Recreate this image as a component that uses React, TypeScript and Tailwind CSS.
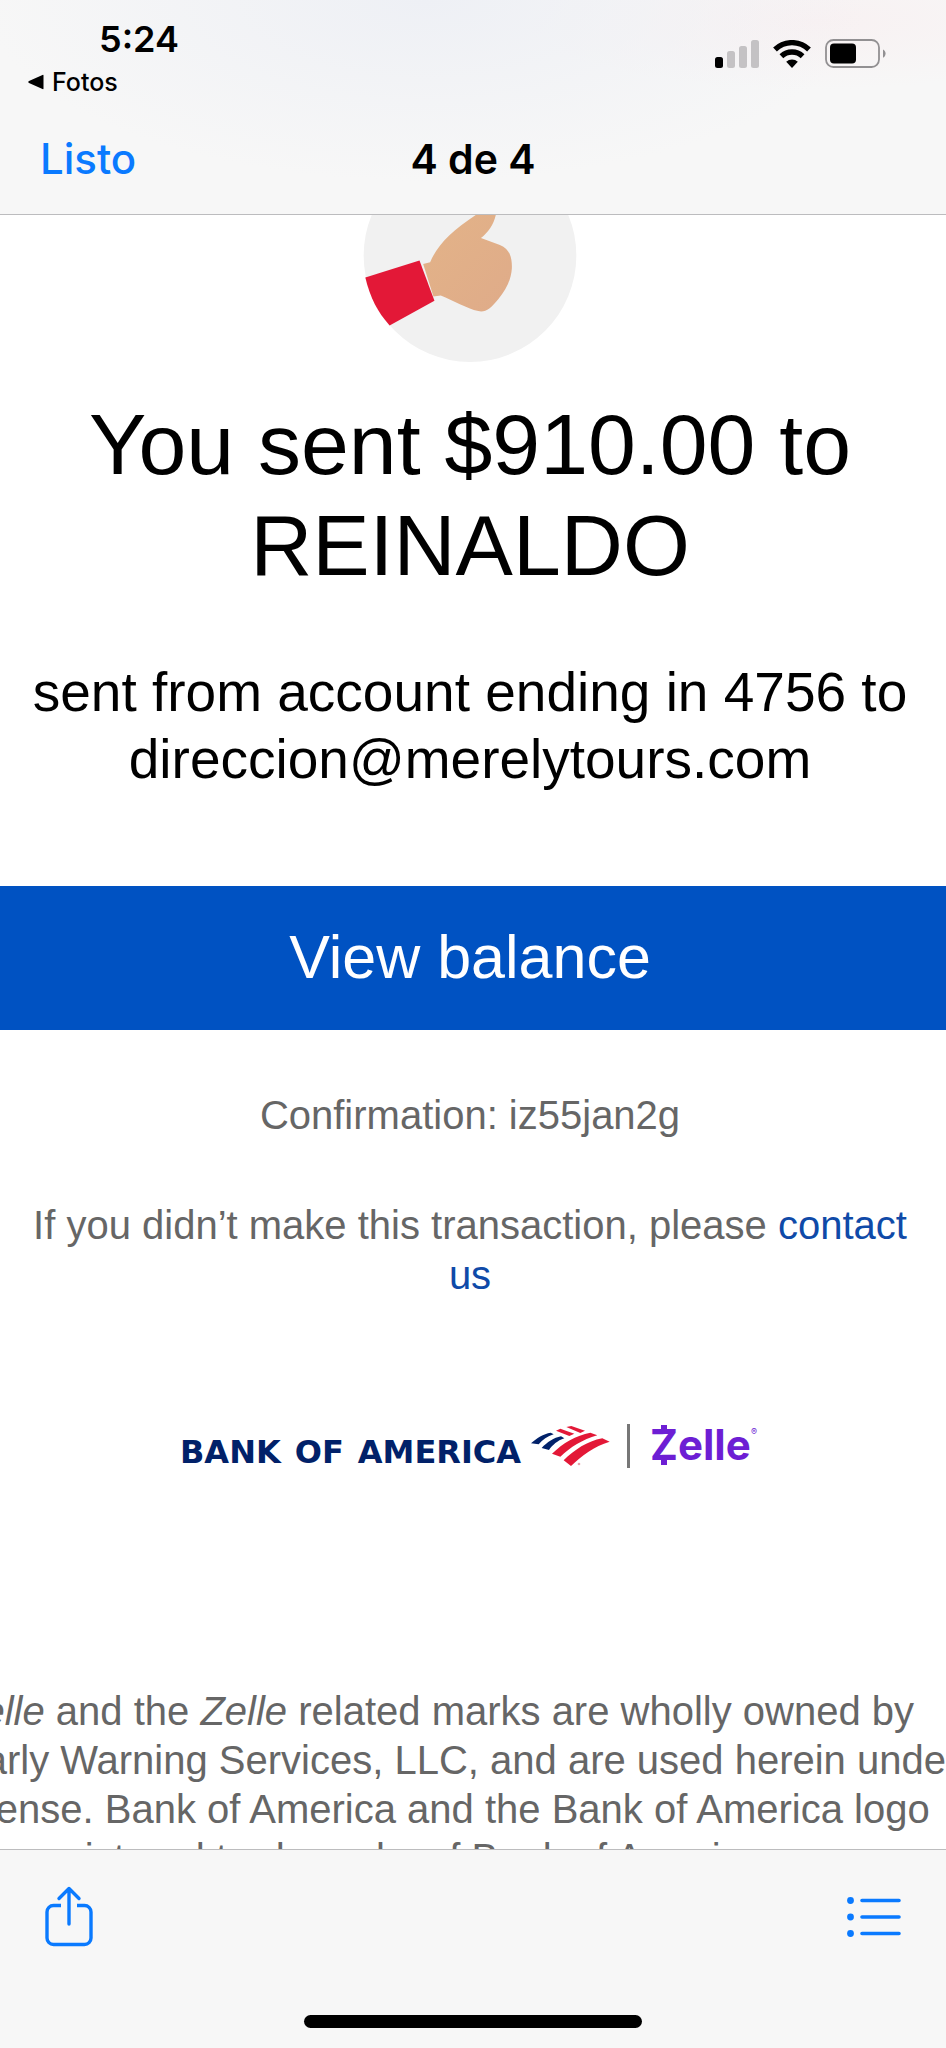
function SignalIcon() {
  return (
    <svg className="h-7 w-11" viewBox="0 0 44 28" aria-hidden="true">
      <rect x="0" y="17" width="8" height="11" rx="2.5" fill="#000" />
      <rect x="12" y="11" width="8" height="17" rx="2.5" fill="#c4c2c4" />
      <rect x="24" y="6" width="8" height="22" rx="2.5" fill="#c4c2c4" />
      <rect x="36" y="0" width="8" height="28" rx="2.5" fill="#c4c2c4" />
    </svg>
  );
}

function WifiIcon() {
  return (
    <svg className="h-7 w-[38px]" viewBox="0 0 38 28" aria-hidden="true">
      <g fill="none" stroke="#000" strokeWidth="5.4">
        <path d="M2 9.5A24.5 24.5 0 0 1 36 9.5" />
        <path d="M8.4 16.2A15.4 15.4 0 0 1 29.6 16.2" />
      </g>
      <path d="M19 28l-5.8-6.2a8.6 8.6 0 0 1 11.6 0z" fill="#000" />
    </svg>
  );
}

function BatteryIcon() {
  return (
    <svg className="h-[29px] w-[61px]" viewBox="0 0 61 29" aria-hidden="true">
      <rect x="1" y="1" width="53" height="27" rx="7.5" fill="none" stroke="#929092" strokeWidth="1.8" />
      <rect x="5" y="4.5" width="26" height="20" rx="4" fill="#000" />
      <path d="M58 10.5c3.4 1.4 3.4 6.8 0 8.2z" fill="#929092" />
    </svg>
  );
}

function ThumbsUp() {
  return (
    <svg className="h-[147px] w-[214px]" viewBox="68 45 644 442" role="img" aria-label="Thumbs up">
      <defs>
        <linearGradient id="skin" x1="0" y1="0" x2="1" y2="1">
          <stop offset="0" stopColor="#e3b388" />
          <stop offset="1" stopColor="#dfab89" />
        </linearGradient>
      </defs>
      <circle cx="390" cy="167" r="320" fill="#f1f1f1" />
      <path
        d="M410 43H468C462 73 444 98 423 114L480 135C508 146 517 170 516 205C514 240 498 270 475 298C452 326 436 339 415 334C380 326 340 302 302 287L280 290L249 192L270 187C292 134 336 92 410 43Z"
        fill="url(#skin)"
      />
      <path d="M75 233L238 182L283 303L148 377C112 337 90 295 75 233Z" fill="#e31837" />
    </svg>
  );
}

function FlagLogo() {
  return (
    <svg className="h-[42px] w-20" viewBox="155 78 240 126" aria-hidden="true">
      <g fill="#012169">
        <path d="M155 133C172 117 192 105 214 101L223 106C204 112 190 122 178 136Z" />
        <path d="M187 147C203 130 224 116 245 112L255 118C234 125 220 138 209 153Z" />
      </g>
      <g fill="#e31837">
        <path d="M230 95L243 89L285 104L270 111Z" />
        <path d="M261 84L276 81L317 95L303 102Z" />
        <path d="M218 164C251 132 290 109 333 101L354 109C309 122 273 145 243 173Z" />
        <path d="M253 184C286 152 323 127 369 118L391 128C344 142 308 169 275 201Z" />
      </g>
      <circle cx="299" cy="195" r="4" fill="#e9a3ad" />
    </svg>
  );
}

function ZelleLogo() {
  return (
    <svg className="h-11 w-[110px]" viewBox="0 0 110 44" role="img" aria-label="Zelle">
      <g fill="#6d1ed4">
        <text x="0" y="36" fontFamily="Inter, sans-serif" fontSize="42" fontWeight="700">
          Zelle
        </text>
        <rect x="11" y="1" width="6" height="6" />
        <rect x="11" y="35" width="6" height="6" />
        <text x="101" y="11" fontFamily="Inter, sans-serif" fontSize="9">
          ®
        </text>
      </g>
    </svg>
  );
}

function ShareIcon() {
  return (
    <svg className="h-[61px] w-12" viewBox="0 0 48 61" fill="none" stroke="#0a7aff" strokeWidth="3.4" aria-hidden="true">
      <path d="M16 19.5H8.5a6.5 6.5 0 0 0-6.5 6.5V52a6.5 6.5 0 0 0 6.5 6.5h31A6.5 6.5 0 0 0 46 52V26a6.5 6.5 0 0 0-6.5-6.5H32" />
      <path d="M24 38V3M14 12.5L24 2.5L34 12.5" strokeLinecap="round" strokeLinejoin="round" />
    </svg>
  );
}

function ListIcon() {
  return (
    <svg className="h-10 w-[54px]" viewBox="0 0 54 40" stroke="#0a7aff" strokeWidth="3.6" strokeLinecap="round" aria-hidden="true">
      <g fill="#0a7aff" stroke="none">
        <circle cx="3.5" cy="3.5" r="3.4" />
        <circle cx="3.5" cy="20" r="3.4" />
        <circle cx="3.5" cy="36.5" r="3.4" />
      </g>
      <path d="M15 3.5H52M15 20H52M15 36.5H52" />
    </svg>
  );
}

export default function App() {
  const legalLines = [
    "Early Warning Services, LLC, and are used herein under",
    "license. Bank of America and the Bank of America logo",
    "are registered trademarks of Bank of America",
  ];

  return (
    <div className="flex h-screen flex-col bg-white font-['Liberation_Sans',Arial,sans-serif] text-black">
      <header className="shrink-0 border-b border-[#bcbcbe] bg-[#f7f7f7] bg-[radial-gradient(ellipse_at_45%_0%,#eef0f5_0%,#f7f7f700_60%),radial-gradient(ellipse_at_86%_10%,#f8f1f2_0%,#f7f7f700_25%)] font-[Inter,sans-serif]">
        <div className="flex items-start justify-between pt-4 pr-[60px] pl-7">
          <div>
            <p className="pl-[71px] text-[36px] leading-[46px] font-semibold">5:24</p>
            <button type="button" className="flex items-center gap-2 text-[25px] leading-10 font-medium">
              <svg className="h-4 w-4" viewBox="0 0 16 16" aria-hidden="true">
                <path d="M15.5 1.5v13q0 1-1 .5L1 9q-1.500-1 0-2L14.500 1q1-.5 1 .5z" />
              </svg>
              Fotos
            </button>
          </div>
          <div className="flex items-center gap-3.5 pt-[23px]">
            <SignalIcon />
            <WifiIcon />
            <BatteryIcon />
          </div>
        </div>
        <div className="grid grid-cols-3 items-center px-10 pt-[31px] pb-[29px] leading-[52px]">
          <button type="button" className="justify-self-start text-[42px] font-medium text-[#0a7aff]">
            Listo
          </button>
          <h2 className="text-center text-[41px] font-semibold">4 de 4</h2>
        </div>
      </header>

      <main className="min-h-0 flex-1 overflow-hidden">
        <div className="flex flex-col items-center pr-1.5 text-center">
          <ThumbsUp />
          <h1 className="mt-8 text-[86px] leading-[101px]">
            You sent $910.00 to
            <br />
            REINALDO
          </h1>
          <p className="mt-[63px] text-[55px] leading-[67px]">
            sent from account ending in 4756 to
            <br />
            direccion@merelytours.com
          </p>
        </div>

        <button type="button" className="mt-[93px] h-36 w-full bg-[#0052c2] pr-1.5 text-[61px] text-white">
          View balance
        </button>

        <div className="flex flex-col items-center pr-1.5 text-center text-[40px] leading-[50px] text-[#666]">
          <p className="mt-[60px]">Confirmation: iz55jan2g</p>
          <p className="mt-[60px] px-6">
            If you didn’t make this transaction, please{" "}
            <a href="#contact" className="text-[#0f4aa8]">
              contact us
            </a>
          </p>
          <div className="mt-[115px] flex items-center">
            <p className="flex gap-3.5 pt-3 font-['DejaVu_Sans',sans-serif] text-[32px] font-bold text-[#012169]">
              <span>BANK</span>
              <span>OF</span>
              <span>AMERICA</span>
            </p>
            <div className="ml-2.5">
              <FlagLogo />
            </div>
            <div className="mr-5 ml-4 h-11 w-[3px] bg-[#777]" />
            <ZelleLogo />
          </div>
        </div>

        {/* The footnote is wider than the screen and runs off its left edge */}
        <p className="mt-[210px] -ml-[42px] text-[40px] leading-[49px] whitespace-nowrap text-[#666]">
          <em>Zelle</em> and the <em>Zelle</em> related marks are wholly owned by
          {legalLines.map((line) => (
            <span key={line} className="block">
              {line}
            </span>
          ))}
        </p>
      </main>

      <footer className="shrink-0 border-t border-[#bcbcbe] bg-[#f7f7f7]">
        <div className="flex items-center justify-between px-[45px] pt-9">
          <button type="button" aria-label="Compartir">
            <ShareIcon />
          </button>
          <button type="button" aria-label="Lista">
            <ListIcon />
          </button>
        </div>
        <div className="mx-auto mt-[68px] mb-5 h-[13px] w-[338px] rounded-full bg-black" />
      </footer>
    </div>
  );
}
